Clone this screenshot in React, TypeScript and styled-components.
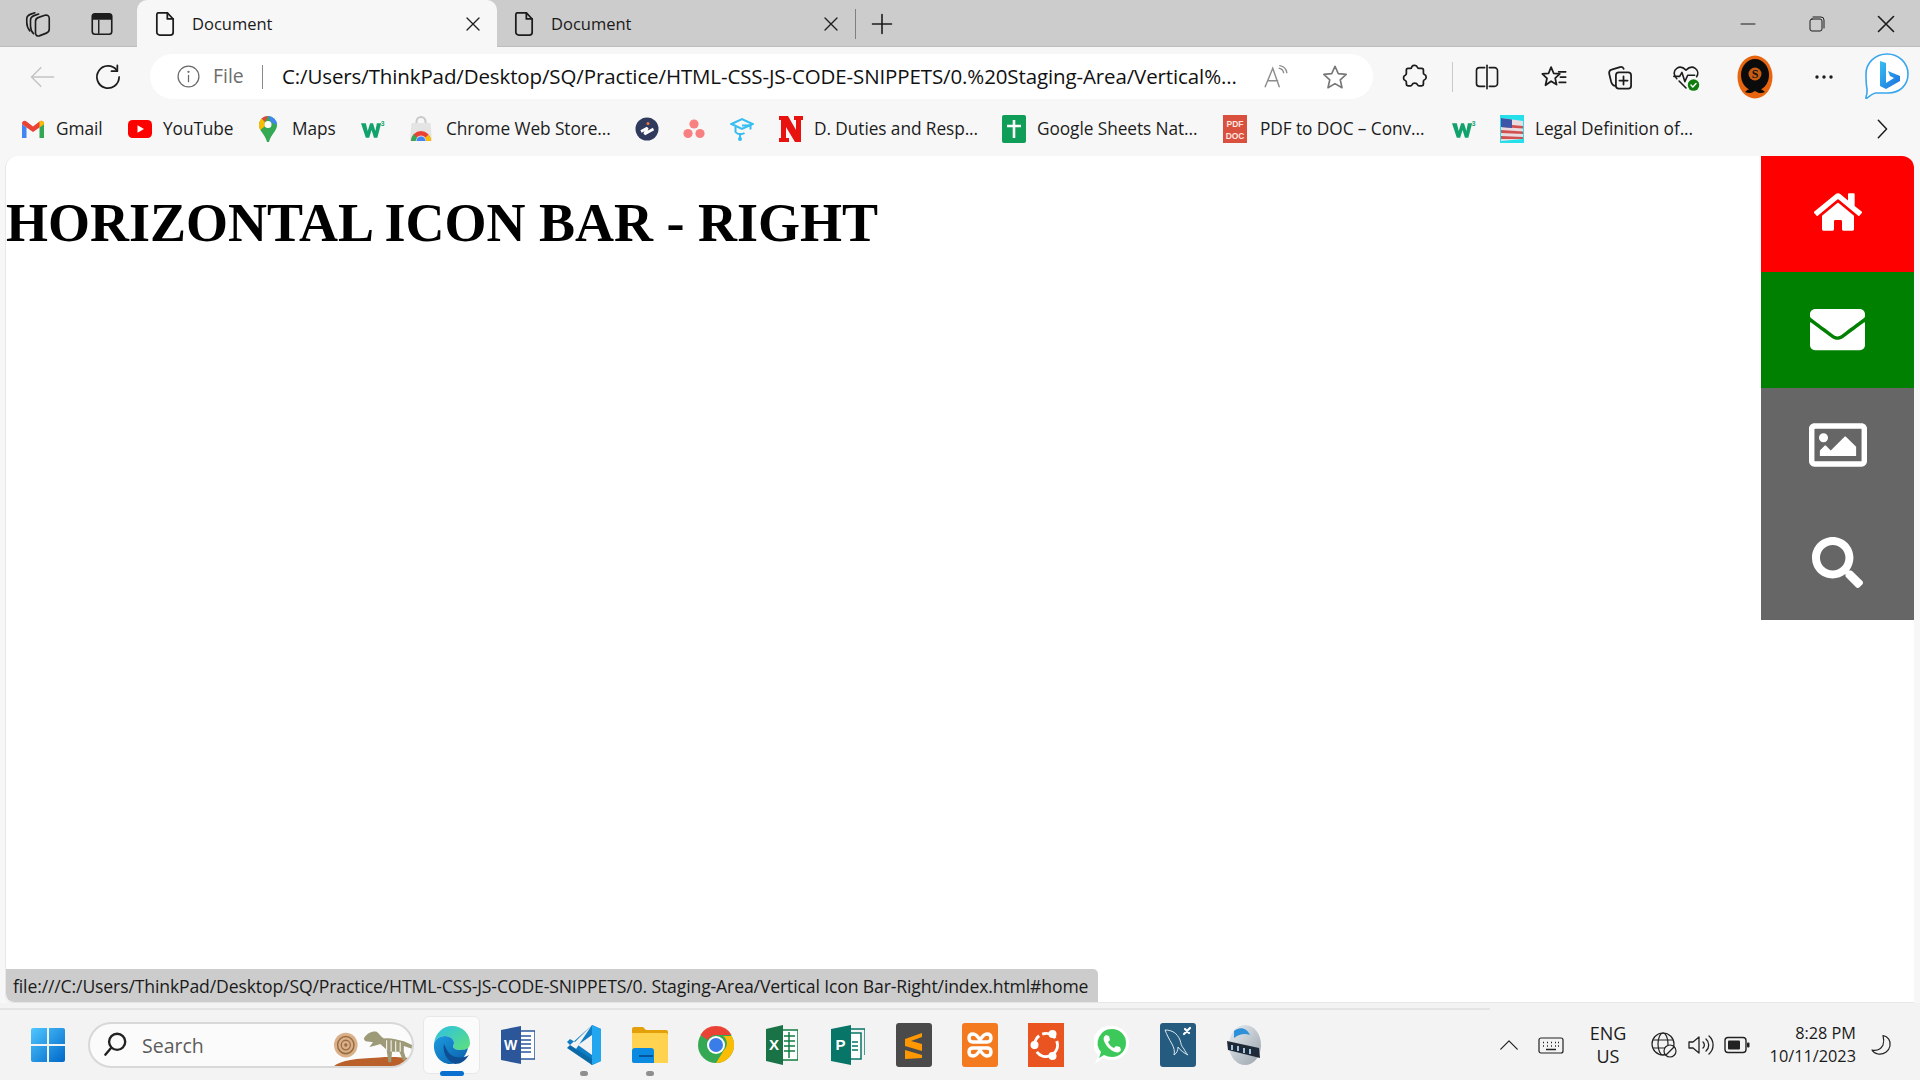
import React from 'react';
import styled, { createGlobalStyle } from 'styled-components';
import { FaHome, FaEnvelope, FaRegImage, FaSearch } from 'react-icons/fa';

const Global = createGlobalStyle`
  html, body { margin: 0; padding: 0; width: 1920px; height: 1080px; overflow: hidden; }
  body { font-family: "Open Sans", "Noto Sans", sans-serif; color: #1a1a1a; }
`;

const Screen = styled.div`
  width: 1920px; height: 1080px; display: flex; flex-direction: column; background: #f7f7f7;
`;
const TabStrip = styled.div`
  height: 47px; flex: none; display: flex; align-items: stretch; background: #cccccc; padding-left: 6px;
  box-shadow: inset 0 -1px 0 #bdbdbd;
`;
const Slot = styled.div<{ $w: number }>`
  width: ${p => p.$w}px; flex: none; display: flex; align-items: center; justify-content: center; color: #1c1c1c;
`;
const Tab = styled.div<{ $active?: boolean }>`
  display: flex; align-items: center; flex: none;
  width: ${p => (p.$active ? 360 : 358)}px;
  margin-left: ${p => (p.$active ? 3 : 0)}px;
  background: ${p => (p.$active ? '#f7f7f7' : 'transparent')};
  border-radius: 10px 10px 0 0;
`;
const TabTitle = styled.span`
  flex: 1; font-size: 16.5px; color: #1a1a1a; white-space: nowrap;
`;
const TabSep = styled.div`
  width: 1px; height: 30px; background: #7f7f7f; align-self: center; flex: none;
`;
const Spacer = styled.div`flex: 1;`;

const Toolbar = styled.div`
  height: 52px; flex: none; display: flex; align-items: stretch; padding-top: 7px; box-sizing: border-box;
`;
const AddressBar = styled.div`
  width: 1223px; height: 45px; margin-left: 18px; flex: none; background: #fff; border-radius: 23px;
  display: flex; align-items: center; padding-left: 26px; padding-right: 9px; box-sizing: border-box;
`;
const FileLabel = styled.span`
  font-size: 19.4px; color: #6e6e6e; margin-left: 12px; width: 35px; flex: none; padding-bottom: 2px;
`;
const BarSep = styled.div`
  width: 1px; height: 24px; background: #8a8a8a; margin-left: 14px; flex: none;
`;
const Url = styled.span`
  margin-left: 19px; width: 960px; flex: none; font-size: 20.5px; letter-spacing: -0.12px; color: #111; white-space: nowrap; overflow: hidden; padding-bottom: 2px;
`;
const PushRight = styled.div`margin-left: auto; display: flex;`;
const ToolDivider = styled.div`
  width: 1px; height: 30px; background: #c9c9c9; align-self: center; margin-left: 4px; flex: none;
`;
const ExtensionSlot = styled(Slot)`margin-left: 9px;`;

const BookmarkBar = styled.div`
  height: 57px; flex: none; display: flex; align-items: center; padding: 2px 0 0 21px; box-sizing: border-box;
`;
const Bookmark = styled.div<{ $w: number; $gap: number }>`
  width: ${p => p.$w}px; flex: none; display: flex; align-items: center; gap: ${p => p.$gap}px; white-space: nowrap;
  font-size: 17.3px; letter-spacing: -0.08px; color: #1c1c1c;
`;
const BookmarkIcon = styled.div`
  width: 24px; height: 24px; flex: none; display: flex; align-items: center; justify-content: center;
`;
const Chevron = styled.div`
  margin-left: auto; width: 76px; display: flex; justify-content: center;
`;

const Page = styled.main`
  height: 847px; flex: none; margin: 0 6px 0 5px; background: #fff; border-radius: 12px 12px 0 8px;
  position: relative; overflow: hidden; display: flex; justify-content: space-between; align-items: flex-start;
  border-left: 1px solid #e8e8e8; border-bottom: 1px solid #e6e6e6; box-sizing: border-box;
`;
const Heading = styled.h1`
  font-family: "Liberation Serif", serif; font-weight: 700; font-size: 54px; margin: 36px 0 0; color: #000; white-space: nowrap;
`;
const IconBar = styled.nav`
  width: 153px; flex: none; display: flex; flex-direction: column;
`;
const IconLink = styled.a<{ $bg: string; $lift?: number }>`
  height: 116px; display: flex; align-items: center; justify-content: center; background: ${p => p.$bg}; color: #fff;
  box-sizing: border-box; padding-bottom: ${p => p.$lift ?? 0}px;
`;
const StatusBubble = styled.div`
  position: absolute; left: 0; bottom: 0; width: 1092px; height: 33px; background: #cccccc; border-radius: 0 5px 0 8px;
  font-size: 17.6px; line-height: 34px; padding-left: 7px; box-sizing: border-box; color: #1a1a1a; white-space: nowrap; letter-spacing: -0.13px;
`;

const TaskGap = styled.div`height: 5px; flex: none; background: #f3f3f3;`;
const TaskRule = styled.div`
  height: 2px; flex: none; background: linear-gradient(to right, #e4e4e4 0, #e4e4e4 1490px, #f3f3f3 1490px);
`;
const Taskbar = styled.footer`
  height: 70px; flex: none; background: #f3f3f3; display: flex; align-items: center;
`;
const StartSlot = styled(Slot)`margin-left: 8px;`;
const SearchBox = styled.div`
  width: 326px; height: 46px; flex: none; background: #fbfbfb; border: 2px solid #d8d8d8; border-radius: 24px; box-sizing: border-box;
  display: flex; align-items: center; padding-left: 12px; overflow: hidden;
`;
const SearchText = styled.span`
  font-size: 19.5px; color: #5c5c5c; margin-left: 14px;
`;
const Fossil = styled.div`
  margin-left: auto; height: 100%; display: flex; align-items: flex-end;
`;
const AppRow = styled.div`display: flex; margin-left: 5px; flex: none;`;
const AppSlot = styled.div<{ $active?: boolean }>`
  width: 66px; height: 58px; flex: none; display: flex; align-items: center; justify-content: center; position: relative;
  &::before {
    content: ''; display: ${p => (p.$active ? 'block' : 'none')};
    position: absolute; left: 4px; right: 5px; top: 0; bottom: 0; background: #fbfbfb; border: 1px solid #e8e8e8; border-radius: 6px;
  }
  & > svg { position: relative; }
`;
const Pip = styled.span<{ $active?: boolean }>`
  position: absolute; bottom: -2px; left: 50%; transform: translateX(-50%); height: 5px; border-radius: 3px;
  width: ${p => (p.$active ? 24 : 8)}px; background: ${p => (p.$active ? '#0b6fd0' : '#8f8f8f')};
`;
const Tray = styled.div`margin-left: auto; margin-right: 14px; display: flex; align-items: center; flex: none;`;
const TrayText = styled.div<{ $w: number; $align: string; $size: number }>`
  width: ${p => p.$w}px; flex: none; text-align: ${p => p.$align}; font-size: ${p => p.$size}px; line-height: 23px; color: #1a1a1a; white-space: nowrap;
`;

/* ---------- line icons ---------- */
const L: React.FC<{ s?: number; w?: number; c?: string; vb?: string; children: React.ReactNode }> = ({ s = 26, w = 1.5, c = 'currentColor', vb = '0 0 24 24', children }) => (
  <svg width={s} height={s} viewBox={vb} fill="none" stroke={c} strokeWidth={w} strokeLinecap="round" strokeLinejoin="round">{children}</svg>
);
const DocIcon = () => <L s={28}><path d="M6 2.5h8l5 5.2V19a2.5 2.5 0 0 1-2.5 2.5h-9A2.5 2.5 0 0 1 5 19V4a1.5 1.5 0 0 1 1-1.5z" /><path d="M14 2.5v5.2h5" /></L>;
const CloseIcon = ({ s = 16 }: { s?: number }) => <L s={s} vb="0 0 16 16" w={1.3}><path d="M2 2l12 12M14 2L2 14" /></L>;
const Collections = () => <L s={30} w={1.3}><path d="M5.500 17.500C3.500 15 3 13 3 10.500V8c0-1.800 1-3 2.800-3.700L9.500 3" /><path d="M8.500 19.800C6.800 18 6 16 6 13.500V9c0-1.800 1-3 2.800-3.700L12.500 4" /><path d="M10 10c0-1.500.8-2.800 2.500-3.300l5-1.700C19.500 4.500 21 5.500 21 7.500V16c0 1.600-.8 2.700-2.300 3.300L13 21.500c-1.700.5-3-.5-3-2.300z" /></L>;
const TabsIcon = () => <svg width="26" height="26" viewBox="0 0 24 24"><rect x="3" y="2.5" width="18" height="19" rx="2.5" fill="none" stroke="#1c1c1c" strokeWidth="1.5" /><path d="M3 5a2.5 2.5 0 0 1 2.5-2.5h13A2.5 2.5 0 0 1 21 5v3H3z" fill="#1c1c1c" /><path d="M9 8v13" stroke="#1c1c1c" strokeWidth="1.3" /></svg>;
const Plus = () => <L s={24} vb="0 0 24 24" w={1.6}><path d="M12 2.5v19M2.5 12h19" /></L>;
const Minimize = () => <L s={16} vb="0 0 16 16" w={1}><path d="M1 8h14" /></L>;
const Restore = () => <L s={18} vb="0 0 18 18" w={1}><rect x="2" y="4" width="12" height="12" rx="2" /><path d="M5 2h8a3 3 0 0 1 3 3v8" /></L>;
const Back = () => <L s={28} c="#c4c4c4" w={1.3}><path d="M3 12h19M11 4l-8 8 8 8" /></L>;
const Refresh = () => <L s={28} w={1.5}><path d="M19.5 6.2A9.5 9.5 0 1 0 21.5 12" /><path d="M20 2v5h-5" /></L>;
const Info = () => <L s={25} c="#6a6a6a" w={1.2}><circle cx="12" cy="12" r="10" /><path d="M12 11v6" /><circle cx="12" cy="7.5" r=".5" /></L>;
const ReadAloud = () => <svg width="26" height="26" viewBox="0 0 24 24" fill="none" stroke="#8c8c8c" strokeWidth="1.3" strokeLinecap="round"><path d="M2 21L9 4l6 17M4.5 15.5h9" /><path d="M15 4a5 5 0 0 1 4 4M15.5 1.5a8 8 0 0 1 6.5 6.5" /></svg>;
const Star = ({ c = '#777' }: { c?: string }) => <L s={28} c={c} w={1.4}><path d="M12 2.8l2.8 6.3 6.8.7-5.1 4.6 1.5 6.8-6-3.500-6 3.500 1.500-6.800L2.400 9.800l6.800-.7z" /></L>;
const Puzzle = () => <L s={28} w={1.5}><path d="M9.500 2.800c1-1.200 3.800-1 4.500.7.400.9.700 1.200 1.700 1.200h2.100c.9 0 1.400.5 1.400 1.400v2.400c0 .8.300 1.100 1 1.400 1.800.7 1.800 3.800 0 4.500-.7.300-1 .6-1 1.400v2.300c0 .9-.5 1.400-1.400 1.400h-2.300c-.8 0-1.100-.3-1.400-1-.7-1.800-3.900-1.800-4.600 0-.3.700-.6 1-1.400 1H6c-.9 0-1.400-.5-1.400-1.400v-1.700c0-.8-.3-1.100-1-1.400-1.900-.7-1.900-3.800 0-4.500.7-.3 1-.6 1-1.400V6.100c0-.9.500-1.400 1.400-1.400h1.900c1 0 1.300-.4 1.600-1.900z" /></L>;
const Split = () => <L s={28} w={1.4}><path d="M10 4H5.500A2.500 2.500 0 0 0 3 6.500v11A2.500 2.500 0 0 0 5.500 20H10" /><path d="M14 4h4.500A2.500 2.500 0 0 1 21 6.500v11a2.500 2.500 0 0 1-2.500 2.500H14" /><path d="M12 2v20" /></L>;
const Favs = () => <L s={28} w={1.5}><path d="M9.500 3.500l2.200 5.300 5.300.5-4 3.700 1.200 5.500-4.700-2.900-4.800 3.500 1.300-6L2 9.300l5.400-.5z" /><path d="M16 7.500h6M17.500 12h4.500M16.500 16.500h5.500" /></L>;
const CollectionsPlus = () => <L s={28} w={1.5}><path d="M8 19.500c-2.500 0-3-1.500-3.600-3.500L2.800 9.500c-.4-2 .2-3.300 2-3.800L12 3.500c1.500-.4 2.500.2 3.200 1.500" /><rect x="8.500" y="8" width="13" height="14" rx="2.500" /><path d="M15 11.500v7M11.500 15h7" /></L>;
const Health = () => <svg width="30" height="30" viewBox="0 0 26 26" fill="none" stroke="#1c1c1c" strokeWidth="1.4" strokeLinecap="round" strokeLinejoin="round"><path d="M5 14.500C2 11.500 2 7.500 5 5.500c2.500-1.700 5.500-1 8 1.500 2.500-2.500 5.500-3.200 8-1.500 2.500 1.800 2.800 4.800 1.200 7.300" /><path d="M2.500 12.500h5l2-3.500 2.500 8 2.500-5.500h6" /><path d="M7 16.500l6 6" /><circle cx="19.500" cy="20" r="5" fill="#107c10" stroke="none" /><path d="M17.300 20l1.600 1.700 2.800-3" stroke="#fff" strokeWidth="1.200" /></svg>;
const Avatar = () => <svg width="36" height="44" viewBox="0 0 36 44"><ellipse cx="18" cy="22" rx="17.500" ry="21.500" fill="#e8650f" /><ellipse cx="18" cy="20" rx="14" ry="16" fill="#0b0b0b" /><circle cx="18" cy="19" r="6.500" fill="#c85c14" /><text x="18" y="23" textAnchor="middle" fontFamily="Liberation Serif" fontWeight="700" fontSize="12" fill="#111">S</text><path d="M8 37c4-4 7-3 10-6 3 3 6 2 10 6-4 2-7 1-10-1-3 2-6 3-10 1z" fill="#0b0b0b" /></svg>;
const Dots = () => <svg width="20" height="6" viewBox="0 0 20 6"><circle cx="3" cy="3" r="1.700" fill="#1c1c1c" /><circle cx="10" cy="3" r="1.700" fill="#1c1c1c" /><circle cx="17" cy="3" r="1.700" fill="#1c1c1c" /></svg>;
const Bing = () => <svg width="46" height="50" viewBox="0 0 46 50"><defs><linearGradient id="bg1" x1="0" y1="0" x2="1" y2="1"><stop offset="0" stopColor="#36bff0" /><stop offset="1" stopColor="#1a6fe0" /></linearGradient></defs><path d="M23 2c12 0 21 9 21 20 0 11-8 19-20 19H12c-3 0-6 3-9 5-1 .6-1.500 0-1-1 1-3 1.500-5 1-8C2 32 2 27 2 22 2 11 11 2 23 2z" fill="#fff" stroke="#3aa6ee" strokeWidth="1.600" /><path d="M16 9l6 2v20l8-5-4-2-2-5 12 5v5l-14 8-6-3z" fill="url(#bg1)" /></svg>;
const ChevronRight = () => <L s={22} w={1.6}><path d="M8 2.500L17 12l-9 9.500" /></L>;

/* ---------- bookmark icons ---------- */
const Gmail = () => <svg width="24" height="20" viewBox="0 0 24 20"><path d="M1 5v14h4.500V8.500z" fill="#4285f4" /><path d="M23 5v14h-4.500V8.500z" fill="#34a853" /><path d="M1 5c0-3 2.500-4 4.500-2.500L12 7.500l6.500-5C20.500 1 23 2 23 5l-4.500 3.500L12 13 5.500 8.500z" fill="#ea4335" /><path d="M18.500 2.500C20.500 1 23 2 23 5l-4.500 3.500z" fill="#fbbc04" /></svg>;
const YouTube = () => <svg width="24" height="18" viewBox="0 0 24 18"><rect width="24" height="18" rx="4.500" fill="#ff0000" /><path d="M9.500 5.200v7.600l6.500-3.800z" fill="#fff" /></svg>;
const Maps = () => <svg width="20" height="28" viewBox="0 0 20 28"><path d="M10 1a9 9 0 0 1 9 9c0 6-6 9-8 17h-2C7 19 1 16 1 10a9 9 0 0 1 9-9z" fill="#34a853" /><path d="M3.500 3.500A9 9 0 0 1 10 1l-3 6z" fill="#ea4335" /><path d="M10 1a9 9 0 0 1 9 9l-6-3z" fill="#4285f4" /><path d="M1 10c0-2.500 1-5 2.500-6.500L7 7c-.8 1.500-.6 3 .2 4l-5 4C1.500 13.500 1 12 1 10z" fill="#fbbc04" /><circle cx="10" cy="9.500" r="3.500" fill="#fff" /></svg>;
const W3 = () => <svg width="25" height="20" viewBox="0 0 25 20"><path d="M0 4h5l2 8 2.500-8h3l2.500 8 1.500-8H21l-4 15h-3.500L11 11l-2.500 8H5z" fill="#12a36d" /><text x="20.500" y="7" fontSize="7" fontFamily="Liberation Sans" fontWeight="700" fill="#12a36d">3</text></svg>;
const WebStore = () => <svg width="24" height="26" viewBox="0 0 24 26"><path d="M7.500 8V5.500a4.500 4.500 0 0 1 9 0V8" fill="none" stroke="#c9c9c9" strokeWidth="2" /><path d="M2.500 7h19l1.500 18H1z" fill="#e4e4e4" /><path d="M2 25a10 10 0 0 1 20 0h-4.500a5.500 5.500 0 0 0-11 0z" fill="#ea4335" /><path d="M2 25a10 10 0 0 1 3-7l3 4a5.500 5.500 0 0 0-1.500 3z" fill="#34a853" /><path d="M22 25a10 10 0 0 0-2.500-6.500L16 22a5.500 5.500 0 0 1 1.500 3z" fill="#fbbc04" /><path d="M7.500 25a4.500 4.500 0 0 1 9 0z" fill="#4285f4" /></svg>;
const Swirl = () => <svg width="24" height="24" viewBox="0 0 24 24"><circle cx="12" cy="12" r="11.500" fill="#2f3a5c" /><path d="M6 14.500l6.500-3.500-3 6 9-5" fill="none" stroke="#fff" strokeWidth="2.600" strokeLinejoin="bevel" /><circle cx="13" cy="6.500" r="1.500" fill="#f0764a" /></svg>;
const Asana = () => <svg width="22" height="20" viewBox="0 0 22 20"><circle cx="11" cy="5" r="4.600" fill="#f98080" /><circle cx="5" cy="14.500" r="4.600" fill="#f98080" /><circle cx="17" cy="14.500" r="4.600" fill="#f98080" /></svg>;
const Cap = () => <svg width="24" height="26" viewBox="0 0 24 26" fill="none" stroke="#35bdf2" strokeWidth="2"><path d="M1.500 8L12 3l10.500 5L12 13z" /><path d="M5.500 11v5c2 2.500 6 3 9 1" /><path d="M12 9.500h8.500v4" /><path d="M10 17v5" /><circle cx="10" cy="23" r="1" /></svg>;
const Nebraska = () => <svg width="24" height="28" viewBox="0 0 24 28"><path d="M0 1h9l8 14V5h-2V1h9v4h-2v22h-6L7 12v11h3v4H0v-4h2V5H0z" fill="#e8120f" /></svg>;
const Sheets = () => <svg width="24" height="28" viewBox="0 0 24 28"><rect width="24" height="28" rx="2" fill="#0f9d58" /><path d="M5 11h14M12 5v18" stroke="#fff" strokeWidth="2.600" /></svg>;
const PdfDoc = () => <svg width="24" height="28" viewBox="0 0 24 28"><rect width="24" height="28" fill="#d9503f" /><text x="12" y="12" textAnchor="middle" fontFamily="Liberation Sans" fontWeight="700" fontSize="8.500" fill="#fde5df">PDF</text><text x="12" y="24" textAnchor="middle" fontFamily="Liberation Sans" fontWeight="700" fontSize="8.500" fill="#fde5df">DOC</text></svg>;
const Flag = () => <svg width="24" height="28" viewBox="0 0 24 28"><rect width="24" height="28" fill="#25e0ea" /><path d="M1 3l22 3v18L1 26z" fill="#e9dbe0" /><path d="M1 9l22 2v2.500L1 12zM1 15l22 1.500V19L1 18zM1 21l22 1v2L1 24z" fill="#d0504f" /><path d="M1 3l11 1.500V13L1 12z" fill="#3d56a8" /></svg>;

/* ---------- taskbar icons ---------- */
const WinLogo = () => <svg width="36" height="36" viewBox="0 0 36 36"><defs><linearGradient id="win" x1="0" y1="0" x2="1" y2="1"><stop offset="0" stopColor="#4fc7ff" /><stop offset="1" stopColor="#0067c8" /></linearGradient></defs><path d="M1 3a2 2 0 0 1 2-2h14v16H1zM19 1h14a2 2 0 0 1 2 2v14H19zM1 19h16v16H3a2 2 0 0 1-2-2zM19 19h16v14a2 2 0 0 1-2 2H19z" fill="url(#win)" /></svg>;
const SearchGlass = () => <svg width="26" height="28" viewBox="0 0 24 26" fill="none" stroke="#222" strokeWidth="2.200" strokeLinecap="round"><circle cx="14" cy="10" r="7.500" /><path d="M8.500 15.500L3 22" /></svg>;
const FossilArt = () => <svg width="78" height="40" viewBox="0 0 86 42" preserveAspectRatio="none"><path d="M0 42C8 36 24 34 50 33c14-1 26 0 36 1v8z" fill="#b9602b" /><circle cx="13" cy="20" r="13" fill="#d9b088" /><circle cx="13" cy="20" r="9" fill="none" stroke="#9a6c42" strokeWidth="1.600" /><circle cx="13" cy="20" r="5" fill="none" stroke="#9a6c42" strokeWidth="1.400" /><circle cx="13" cy="20" r="1.800" fill="#9a6c42" /><path d="M33 13c3-5 9-8 14-7 3 2 4 5 8 7 7-1 14 1 22 3l9 4v4l-9-3v6l3 9h-4l-4-9h-8l-1 11h-3l-2-13-7-6c-3 1-7 2-12 3l4-5-8-1c-1-1-2-2-2-3z" fill="#9d9a77" /><path d="M58 15v11M63 15v12M68 16v12M73 17v10" stroke="#efeee6" strokeWidth="1.300" /></svg>;
const Edge = () => <svg width="38" height="40" viewBox="0 0 38 40"><defs><linearGradient id="e1" x1="0" y1="0" x2="1" y2="1"><stop offset="0" stopColor="#2bc0e8" /><stop offset="1" stopColor="#5fe07a" /></linearGradient><linearGradient id="e2" x1="0" y1="0" x2="1" y2="1"><stop offset="0" stopColor="#1b9be0" /><stop offset="1" stopColor="#0a5ea8" /></linearGradient></defs><path d="M1 19C2 8 10 1 19 1c11 0 18 8 18 17 0 5-4 7-9 7-4 0-8-1-8-4 0-1 1-1 1-3 0-4-4-7-9-7C7 11 2 14 1 19z" fill="url(#e1)" /><path d="M1 19c1-5 6-8 11-8 5 0 9 3 9 7 0 2-1 2-1 3 0 3 4 4 8 4 3 0 5-1 7-2-2 9-9 16-18 16C8 39 0 30 1 19z" fill="url(#e2)" /><path d="M11 19c-2 8 3 17 11 20 6 0 10-3 14-9-3 2-8 3-13 2-6-1-9-6-12-13z" fill="#0d4e95" /></svg>;
const Word = () => <svg width="34" height="38" viewBox="0 0 34 38"><rect x="14" y="5" width="20" height="28" fill="#fff" stroke="#2b579a" strokeWidth="1.500" /><path d="M18 10h12M18 14h12M18 18h12M18 22h12M18 26h12" stroke="#2b579a" strokeWidth="1.500" /><path d="M0 4l20-4v38L0 34z" fill="#2b579a" /><text x="9.500" y="24" textAnchor="middle" fontFamily="Liberation Sans" fontWeight="700" fontSize="14" fill="#fff">W</text></svg>;
const VSCode = () => <svg width="36" height="42" viewBox="0 0 36 42"><path d="M26 1l9 4v32l-9 4-16-16z" fill="#0f7dc4" /><path d="M26 1l9 4v32l-9 4z" fill="#22a6f0" /><path d="M26 1L4 21l-3-3 3-3 5 3z" fill="#0f7dc4" /><path d="M26 41L1 24l3-3 22 14z" fill="#0a6aa8" /><path d="M26 11L12 21l14 10z" fill="#f3f3f3" /></svg>;
const Folder = () => <svg width="36" height="40" viewBox="0 0 36 40"><path d="M0 4a2 2 0 0 1 2-2h9l3 3h20a2 2 0 0 1 2 2v8H0z" fill="#e3a008" /><path d="M0 8h34a2 2 0 0 1 2 2v28H2a2 2 0 0 1-2-2z" fill="#ffd250" /><path d="M0 26c0-2 1-3 3-3h16c2 0 3 1 3 3v12H2a2 2 0 0 1-2-2z" fill="#0a8ae0" /><path d="M7 31h14" stroke="#04559c" strokeWidth="2" /></svg>;
const Chrome = () => <svg width="36" height="44" viewBox="0 0 36 44"><g transform="translate(0 4)"><circle cx="18" cy="18" r="18" fill="#34a853" /><path d="M18 0a18 18 0 0 1 15.600 9H18A9 9 0 0 0 10 14L2.400 9A18 18 0 0 1 18 0z" fill="#ea4335" transform="translate(0 -1)" /><path d="M33.600 9A18 18 0 0 1 18 36l8-13a9 9 0 0 0-1-14z" fill="#fbbc04" /><circle cx="18" cy="18" r="9" fill="#fff" /><circle cx="18" cy="18" r="7" fill="#3b7de8" /></g></svg>;
const Excel = () => <svg width="32" height="40" viewBox="0 0 32 40"><rect x="14" y="5" width="18" height="30" fill="#fff" stroke="#107c41" strokeWidth="1.500" /><path d="M18 11h11M18 16h11M18 21h11M18 26h11M23 7v26" stroke="#107c41" strokeWidth="1.500" /><path d="M0 4l17-4v40L0 36z" fill="#1a7346" /><text x="8" y="25" textAnchor="middle" fontFamily="Liberation Sans" fontWeight="700" fontSize="15" fill="#fff">X</text></svg>;
const Publisher = () => <svg width="34" height="40" viewBox="0 0 34 40"><path d="M20 4h14v26" fill="none" stroke="#077568" strokeWidth="1.400" /><rect x="14" y="8" width="16" height="26" fill="#fff" stroke="#077568" strokeWidth="1.500" /><path d="M21 17h6M21 21h6M21 25h6" stroke="#077568" strokeWidth="1.500" /><path d="M0 4l20-4v40L0 36z" fill="#077568" /><text x="9.500" y="25" textAnchor="middle" fontFamily="Liberation Sans" fontWeight="700" fontSize="15" fill="#fff">P</text></svg>;
const Sublime = () => <svg width="36" height="44" viewBox="0 0 36 44"><rect width="36" height="44" rx="3" fill="#4a4a4a" /><path d="M26 10L9 16v7l17 5v-7L15 18l11-4zM9 27l17 5v3L9 36z" fill="#ff9800" /></svg>;
const Xampp = () => <svg width="36" height="44" viewBox="0 0 36 44"><rect width="36" height="44" rx="3" fill="#f37a1f" /><path d="M11 11c-3 0-4 2-4 4s1 4 4 4h14c3 0 4-2 4-4s-1-4-4-4c-2 0-4 1-7 6-3-5-5-6-7-6zM11 33c-3 0-4-2-4-4s1-4 4-4h14c3 0 4 2 4 4s-1 4-4 4c-2 0-4-1-7-6-3 5-5 6-7 6z" fill="none" stroke="#fff" strokeWidth="3.400" /></svg>;
const Ubuntu = () => <svg width="36" height="44" viewBox="0 0 36 44"><rect width="36" height="44" fill="#e95420" /><circle cx="18" cy="22" r="11.500" fill="none" stroke="#fff" strokeWidth="3" strokeDasharray="14.500 3.500" transform="rotate(-20 18 22)" /><circle cx="6.500" cy="22" r="4" fill="#fff" /><circle cx="24.500" cy="11" r="4" fill="#fff" /><circle cx="24.500" cy="33" r="4" fill="#fff" /></svg>;
const WhatsApp = () => <svg width="36" height="44" viewBox="0 0 36 44"><path d="M18 3a17 17 0 0 1 0 34c-3 0-6-1-8.500-2L1 41l3-9a17 17 0 0 1 14-29z" fill="#fff" /><path d="M18 6a14 14 0 0 1 0 28c-3 0-5-1-8-2l-5 3 2-6A14 14 0 0 1 18 6z" fill="#3dc95a" /><path d="M12 12c-2 1-3 3-2 6 2 5 6 9 11 11 3 1 5 0 6-2l-1-3-4-1-2 2c-3-1-5-4-6-6l2-2-1-4z" fill="#fff" /></svg>;
const MySql = () => <svg width="36" height="44" viewBox="0 0 36 44"><rect width="36" height="44" rx="3" fill="#265b80" /><path d="M5 7c7 0 12 3 15 10 1 3 1 6 4 9 1 2 2 4 4 6-4-2-8-5-10-8 0 3-1 6-4 8 1-4 0-7-2-11C9 16 7 12 5 7z" fill="none" stroke="#dce7ee" strokeWidth="1" /><path d="M24 11l6-6M25 6l4 4" stroke="#fff" strokeWidth="2.200" strokeLinecap="round" /></svg>;
const Obs = () => <svg width="36" height="44" viewBox="0 0 36 44"><defs><linearGradient id="ob" x1="0" y1="0" x2="1" y2="1"><stop offset="0" stopColor="#e8eef3" /><stop offset="1" stopColor="#9aa3ab" /></linearGradient></defs><ellipse cx="19" cy="22" rx="16" ry="20" fill="url(#ob)" /><path d="M8 8c6-5 13-3 16 4-5-2-11-1-16 3z" fill="#2e90d8" /><path d="M1 18l32 7 1 10-32-8z" fill="#1e2a38" /><path d="M6 22v5M12 23v5M18 25v5M24 26v5" stroke="#9fc4e0" strokeWidth="2" /></svg>;
const Caret = () => <L s={22} w={1.3}><path d="M3 16.500L12 7.500l9 9" /></L>;
const Keyboard = () => <svg width="26" height="20" viewBox="0 0 26 20" fill="none" stroke="#222" strokeWidth="1.200"><rect x="1" y="3" width="24" height="15" rx="2" /><path d="M5 7.500h1M9 7.500h1M13 7.500h1M17 7.500h1M20 7.500h1M5 11h1M9 11h1M13 11h1M17 11h1M20 11h1M8 14.500h10" strokeWidth="1.500" /></svg>;
const Globe = () => <svg width="28" height="28" viewBox="0 0 28 28" fill="none" stroke="#222" strokeWidth="1.200"><circle cx="13" cy="13" r="11" /><ellipse cx="13" cy="13" rx="5" ry="11" /><path d="M3 9h20M3 17h12" /><circle cx="20" cy="20" r="6" fill="#f3f3f3" /><path d="M16 24l8-8" /></svg>;
const Volume = () => <svg width="26" height="24" viewBox="0 0 26 24" fill="none" stroke="#222" strokeWidth="1.300" strokeLinejoin="round" strokeLinecap="round"><path d="M1 9v6h4l6 5V4L5 9z" /><path d="M15 9a4 4 0 0 1 0 6M18 6a8 8 0 0 1 0 12M21 3a12 12 0 0 1 0 18" /></svg>;
const Battery = () => <svg width="26" height="18" viewBox="0 0 26 18"><rect x="1" y="1.500" width="21" height="15" rx="3" fill="none" stroke="#222" strokeWidth="1.400" /><rect x="4" y="4.500" width="12" height="9" rx="1" fill="#222" /><rect x="23" y="6.500" width="2.500" height="5" rx="1" fill="#222" /></svg>;
const Moon = () => <L s={24} c="#222" w={1.2}><path d="M14 2.500c5 1 8 5 7 10.500-1 5-6 9-12 8-3-.5-5-2-6-4 5 1 9-1 11-5 1-3 1-6 0-9.500z" /></L>;

const bookmarks: { w: number; gap?: number; icon: React.ReactNode; label?: string }[] = [
  { w: 107, icon: <Gmail />, label: 'Gmail' },
  { w: 128, icon: <YouTube />, label: 'YouTube' },
  { w: 105, gap: 12, icon: <Maps />, label: 'Maps' },
  { w: 48, icon: <W3 /> },
  { w: 226, gap: 13, icon: <WebStore />, label: 'Chrome Web Store...' },
  { w: 47, icon: <Swirl /> },
  { w: 48, icon: <Asana /> },
  { w: 49, icon: <Cap /> },
  { w: 223, icon: <Nebraska />, label: 'D. Duties and Resp...' },
  { w: 221, icon: <Sheets />, label: 'Google Sheets Nat...' },
  { w: 229, gap: 13, icon: <PdfDoc />, label: 'PDF to DOC – Conv...' },
  { w: 48, icon: <W3 /> },
  { w: 300, icon: <Flag />, label: 'Legal Definition of...' },
];

const apps: { icon: React.ReactNode; active?: boolean; pip?: boolean }[] = [
  { icon: <Edge />, active: true, pip: true },
  { icon: <Word /> },
  { icon: <VSCode />, pip: true },
  { icon: <Folder />, pip: true },
  { icon: <Chrome /> },
  { icon: <Excel /> },
  { icon: <Publisher /> },
  { icon: <Sublime /> },
  { icon: <Xampp /> },
  { icon: <Ubuntu /> },
  { icon: <WhatsApp /> },
  { icon: <MySql /> },
  { icon: <Obs /> },
];

export default function App() {
  return (
    <Screen>
      <Global />
      <TabStrip>
        <Slot $w={64}><Collections /></Slot>
        <Slot $w={64}><TabsIcon /></Slot>
        <Tab $active>
          <Slot $w={55}><DocIcon /></Slot>
          <TabTitle>Document</TabTitle>
          <Slot $w={48}><CloseIcon /></Slot>
        </Tab>
        <Tab>
          <Slot $w={54}><DocIcon /></Slot>
          <TabTitle>Document</TabTitle>
          <Slot $w={48}><CloseIcon /></Slot>
        </Tab>
        <TabSep />
        <Slot $w={52}><Plus /></Slot>
        <Spacer />
        <Slot $w={69}><Minimize /></Slot>
        <Slot $w={69}><Restore /></Slot>
        <Slot $w={69}><CloseIcon s={20} /></Slot>
      </TabStrip>
      <Toolbar>
        <Slot $w={84}><Back /></Slot>
        <Slot $w={48}><Refresh /></Slot>
        <AddressBar>
          <Info />
          <FileLabel>File</FileLabel>
          <BarSep />
          <Url>C:/Users/ThinkPad/Desktop/SQ/Practice/HTML-CSS-JS-CODE-SNIPPETS/0.%20Staging-Area/Vertical%...</Url>
          <PushRight>
            <Slot $w={59}><ReadAloud /></Slot>
            <Slot $w={59}><Star /></Slot>
          </PushRight>
        </AddressBar>
        <ExtensionSlot $w={66}><Puzzle /></ExtensionSlot>
        <ToolDivider />
        <Slot $w={68}><Split /></Slot>
        <Slot $w={66}><Favs /></Slot>
        <Slot $w={66}><CollectionsPlus /></Slot>
        <Slot $w={66}><Health /></Slot>
        <Slot $w={72}><Avatar /></Slot>
        <Slot $w={66}><Dots /></Slot>
        <Slot $w={60}><Bing /></Slot>
      </Toolbar>
      <BookmarkBar>
        {bookmarks.map((b, i) => (
          <Bookmark key={i} $w={b.w} $gap={b.gap ?? 11}>
            <BookmarkIcon>{b.icon}</BookmarkIcon>
            {b.label && <span>{b.label}</span>}
          </Bookmark>
        ))}
        <Chevron><ChevronRight /></Chevron>
      </BookmarkBar>
      <Page>
        <Heading>HORIZONTAL ICON BAR - RIGHT</Heading>
        <IconBar>
          <IconLink $bg="#ff0000" $lift={4}><FaHome size={48} /></IconLink>
          <IconLink $bg="#008000" $lift={1}><FaEnvelope size={55} /></IconLink>
          <IconLink $bg="#666666" $lift={3}><FaRegImage size={58} /></IconLink>
          <IconLink $bg="#666666"><FaSearch size={51} /></IconLink>
        </IconBar>
        <StatusBubble>file:///C:/Users/ThinkPad/Desktop/SQ/Practice/HTML-CSS-JS-CODE-SNIPPETS/0. Staging-Area/Vertical Icon Bar-Right/index.html#home</StatusBubble>
      </Page>
      <TaskGap />
      <TaskRule />
      <Taskbar>
        <StartSlot $w={80}><WinLogo /></StartSlot>
        <SearchBox>
          <SearchGlass />
          <SearchText>Search</SearchText>
          <Fossil><FossilArt /></Fossil>
        </SearchBox>
        <AppRow>
          {apps.map((a, i) => (
            <AppSlot key={i} $active={a.active}>
              {a.icon}
              {a.pip && <Pip $active={a.active} />}
            </AppSlot>
          ))}
        </AppRow>
        <Tray>
          <Slot $w={44}><Caret /></Slot>
          <Slot $w={40}><Keyboard /></Slot>
          <TrayText $w={74} $align="center" $size={18}>ENG<br />US</TrayText>
          <Slot $w={38}><Globe /></Slot>
          <Slot $w={36}><Volume /></Slot>
          <Slot $w={36}><Battery /></Slot>
          <TrayText $w={101} $align="right" $size={16.3}>8:28 PM<br />10/11/2023</TrayText>
          <Slot $w={50}><Moon /></Slot>
        </Tray>
      </Taskbar>
    </Screen>
  );
}
